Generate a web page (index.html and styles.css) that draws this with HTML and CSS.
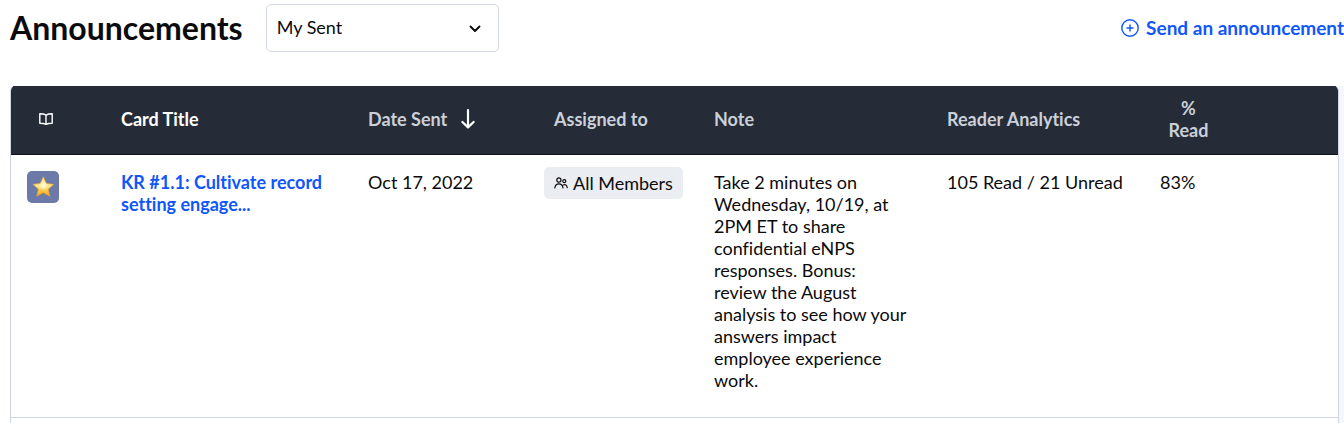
FILE: index.html
```html
<!DOCTYPE html>
<html lang="en">
<head>
<meta charset="utf-8">
<title>Announcements</title>
<link rel="stylesheet" href="styles.css">
</head>
<body>
<header class="page-header">
  <h1 class="page-title">Announcements</h1>
  <div class="filter">
    <select class="filter-select" aria-label="Filter announcements">
      <option>My Sent</option>
      <option>All</option>
    </select>
    <svg class="filter-chevron" viewBox="0 0 12 8" aria-hidden="true"><path d="M1.5 1.5 6 6l4.5-4.5" fill="none" stroke="currentColor" stroke-width="1.9" stroke-linecap="round" stroke-linejoin="round"/></svg>
  </div>
  <a class="send-link" href="#send">
    <svg class="send-icon" viewBox="0 0 18 18" aria-hidden="true" fill="none" stroke="currentColor" stroke-width="1.4" stroke-linecap="round"><circle cx="9" cy="9" r="8.2"/><path d="M9 6v6M6 9h6"/></svg>
    <span>Send an announcement</span>
  </a>
</header>
<main class="content">
  <div class="table-card">
    <table class="table">
      <colgroup>
        <col class="col-icon"><col class="col-title"><col class="col-date"><col class="col-assigned"><col class="col-note"><col class="col-analytics"><col class="col-percent"><col>
      </colgroup>
      <thead>
        <tr>
          <th class="cell-book" aria-label="Type"><svg class="book-icon" viewBox="0 0 14 12" aria-hidden="true" fill="none" stroke="currentColor" stroke-width="1.4" stroke-linejoin="round"><path d="M7 2.1C5.4 1.1 3.2.8.8.8v9.4c2.4 0 4.6.2 6.2 1.1 1.6-.9 3.8-1.1 6.2-1.1V.8C10.8.8 8.600 1.100 7 2.100zM7 2.100v9"/></svg></th>
          <th class="is-active">Card Title</th>
          <th><span class="sort">Date Sent <svg class="sort-icon" viewBox="0 0 14 20" aria-hidden="true" fill="none" stroke="currentColor" stroke-width="2.2" stroke-linecap="round" stroke-linejoin="round"><path d="M7 1.2v17M1.400 13 7 18.400l5.600-5.400"/></svg></span></th>
          <th class="cell-assigned">Assigned to</th>
          <th>Note</th>
          <th>Reader Analytics</th>
          <th class="cell-percent">% Read</th>
          <th aria-label="Actions"></th>
        </tr>
      </thead>
      <tbody>
        <tr>
          <td><svg class="star-tile" viewBox="0 0 32 32" role="img" aria-label="Star">
            <defs><linearGradient id="gold" x1="0" y1="0" x2="0" y2="1"><stop offset="0" stop-color="#fff0a0"/><stop offset=".5" stop-color="#ffe582"/><stop offset="1" stop-color="#f5a300"/></linearGradient>
            <radialGradient id="shine" cx=".5" cy=".42" r=".4"><stop offset="0" stop-color="#fffce9"/><stop offset="1" stop-color="#fffce9" stop-opacity="0"/></radialGradient></defs>
            <rect width="32" height="32" rx="5" fill="#6b7aa8"/>
            <path d="M16.3 5.8 19.3 12.5 26.6 13.3 21.2 18.2 22.8 25.2 16.3 21.6 9.8 25.2 11.4 18.2 6 13.3 13.3 12.5z" fill="url(#gold)" stroke="#e9a62c" stroke-width=".7" stroke-linejoin="round"/>
            <circle cx="16.3" cy="15.5" r="6" fill="url(#shine)"/>
          </svg></td>
          <td><a class="card-link" href="#card">KR #1.1: Cultivate record setting engage...</a></td>
          <td>Oct 17, 2022</td>
          <td><span class="pill"><svg class="people-icon" viewBox="0 0 14 12" aria-hidden="true" fill="none" stroke="currentColor" stroke-width="1.2" stroke-linecap="round"><circle cx="4.9" cy="3" r="2.1"/><circle cx="10.3" cy="4.2" r="1.5"/><path d="M.8 11c.3-2.8 1.8-4.2 4.1-4.2S8.7 8.2 9 11M9.3 8c2-.8 3.7.2 3.9 2.6"/></svg>All Members</span></td>
          <td>Take 2 minutes on<br>Wednesday, 10/19, at<br>2PM ET to share<br>confidential eNPS<br>responses. Bonus:<br>review the August<br>analysis to see how your<br>answers impact<br>employee experience<br>work.</td>
          <td>105 Read / 21 Unread</td>
          <td>83%</td>
          <td></td>
        </tr>
      </tbody>
    </table>
  </div>
  <div class="gutter"></div>
</main>
</body>
</html>
```
FILE: styles.css
```css
* { box-sizing: border-box; }
body {
  margin: 0;
  min-height: 100vh;
  display: flex;
  flex-direction: column;
  overflow-x: hidden;
  background: #fff;
  color: #0b0b0d;
  font: 18px/22px Lato, "Open Sans", sans-serif;
  font-variant-ligatures: none;
}
.page-header {
  display: flex;
  align-items: center;
  height: 56px;
  margin-bottom: 30px;
  padding-left: 10px;
}
.page-title {
  margin: 0 23px 0 0;
  font-size: 32px;
  line-height: 40px;
  font-weight: 700;
}
.filter { position: relative; width: 233px; }
.filter-select {
  display: block;
  appearance: none;
  width: 100%;
  height: 48px;
  padding: 0 36px 2px 10px;
  border: 1px solid #d5d9e5;
  border-radius: 5px;
  background: #fff;
  color: inherit;
  font: inherit;
}
.filter-chevron {
  position: absolute;
  top: 21px;
  right: 18px;
  width: 12px;
  height: 8px;
  pointer-events: none;
}
.send-link {
  display: flex;
  align-items: center;
  gap: 7px;
  margin-left: auto;
  font-size: 19px;
  white-space: nowrap;
}
.send-link, .card-link {
  color: #0f56fb;
  font-weight: 700;
  text-decoration: none;
}
.send-icon { width: 18px; height: 18px; }
.content {
  flex: 1;
  display: flex;
  padding-left: 10px;
}
.table-card {
  flex: 1;
  border: solid #d0d5e3;
  border-width: 0 1px;
  border-radius: 5px 5px 0 0;
  overflow: hidden;
}
.gutter { width: 5px; background: #f5f7fc; }
.table {
  width: 100%;
  table-layout: fixed;
  border-collapse: collapse;
}
.col-icon { width: 94px; }
.col-title { width: 247px; }
.col-date { width: 176px; }
.col-assigned { width: 170px; }
.col-note { width: 233px; }
.col-analytics { width: 213px; }
.col-percent { width: 89px; }
th {
  height: 68px;
  padding: 11px 16px 13px;
  background: #252c38;
  color: #cbd0d8;
  font-weight: 700;
  text-align: left;
  white-space: nowrap;
}
thead { box-shadow: inset 0 1px #0d131c; border-bottom: 1px solid #0d131c; }
th.is-active, .cell-book, .sort-icon { color: #fff; }
th.cell-book { padding-left: 28px; }
th.cell-assigned { padding-left: 26px; }
th.cell-percent { text-align: center; white-space: normal; }
.book-icon { display: block; width: 14px; height: 12px; }
.sort { display: flex; align-items: center; gap: 14px; }
.sort-icon { width: 14px; height: 20px; }
td {
  padding: 16px 16px 26px;
  border-bottom: 1px solid #d0d5e3;
  vertical-align: top;
}
.star-tile { display: block; width: 32px; height: 32px; }
.pill {
  display: inline-flex;
  align-items: center;
  gap: 5px;
  height: 32px;
  margin: -6px 0;
  padding: 0 10px;
  border-radius: 5px;
  background: #eaedf2;
  white-space: nowrap;
}
.people-icon { width: 14px; height: 12px; }
```
